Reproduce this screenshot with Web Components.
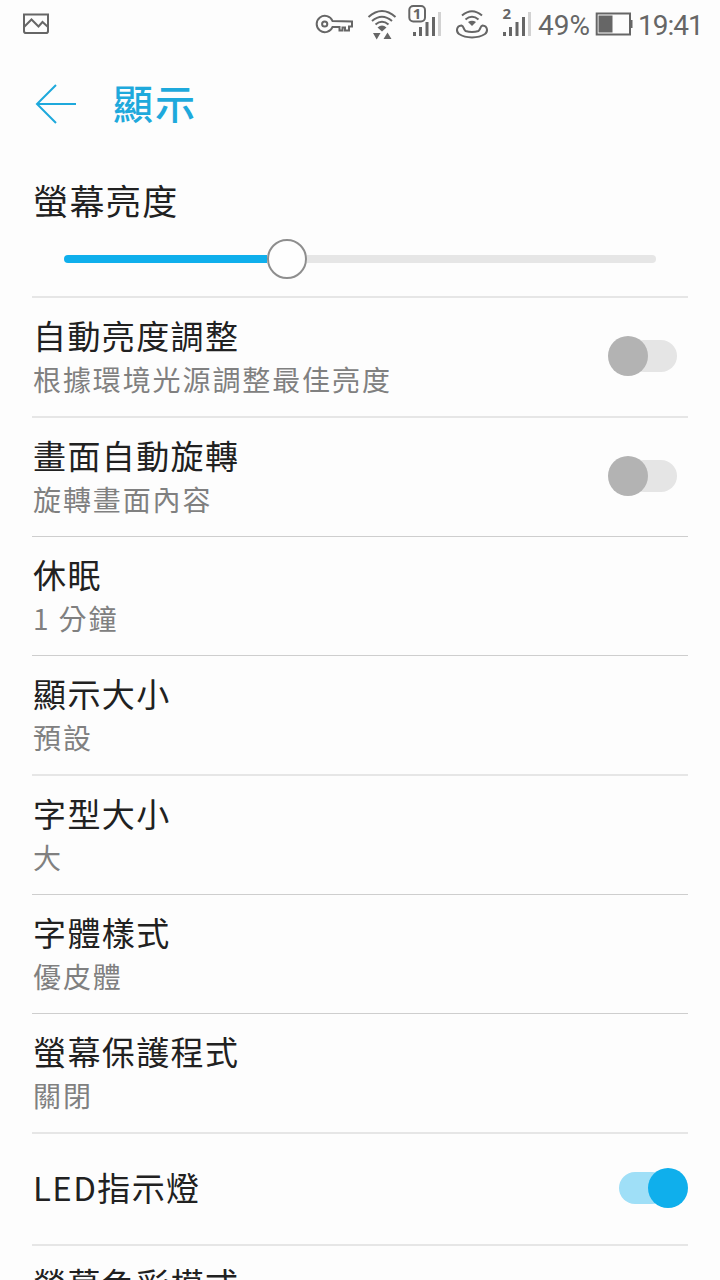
<!DOCTYPE html>
<html lang="zh-Hant">
<head>
<meta charset="utf-8">
<title>顯示</title>
<style>
	body {
		margin: 0;
		width: 720px;
		height: 1280px;
		overflow: hidden;
		background: #fdfdfd;
		font-family: 'Noto Sans CJK TC', sans-serif;
		color: #212121;
	}
</style>
</head>
<body>
<display-settings></display-settings>

<script>
class StatusBar extends HTMLElement {

	constructor() {

		super();

		this.attachShadow({ mode: 'open' });
		this.shadowRoot.innerHTML = `
			<style>
				:host {
					display: flex;
					height: 48px;
					padding: 0 17px 0 22px;
					color: #666;
					font: 28px/51px Roboto, sans-serif;
				}
				svg {
					display: block;
					flex: none;
					fill: none;
					stroke: currentColor;
					stroke-width: 2;
				}
				.solid { fill: currentColor; stroke: none; }
				.dim { fill: #d2d2d2; stroke: none; }
				.spacer { flex: 1; }
				.percent { width: 57px; }
				.clock {
					width: 65px;
					letter-spacing: -1px;
				}
				.percent, .clock { white-space: nowrap; }
				svg text {
					font: bold 15px 'Open Sans', sans-serif;
					fill: currentColor;
					stroke: none;
				}
			</style>
			<svg width="28" height="48">
				<path d="M2 14.5H26V31.2Q26 33 24 33H4Q2 33 2 31.2ZM2 27L9.5 19.5L16.5 26.5L20.5 22L26 27"/>
			</svg>
			<div class="spacer"></div>
			<svg width="41" height="48">
				<path d="M18.500 21A8.200 8.200 0 1 0 18.500 27H25.500V30.500H28.500V27.500H31V30.500H35V26.500H38V21.500Z"/>
				<circle cx="10.700" cy="24" r="2.600"/>
			</svg>
			<svg width="53" height="48" viewBox="355 0 53 48">
				<path d="M368.500 17Q382 5 395.500 17M372 21Q382 12.500 392 21M375.500 24.500Q382 19 388.500 24.500"/>
				<path class="solid" d="M377.500 27.500Q382 23.500 386.500 27.500L382 31.500ZM373 33H380.500L376.700 39.500ZM383.500 39H391.500L387.500 32.500Z"/>
			</svg>
			<svg width="47" height="48" viewBox="408 0 47 48">
				<rect x="409.300" y="6" width="15.700" height="15.500" rx="4"/>
				<text x="412.700" y="19">1</text>
				<path class="solid" d="M413 32H416V36H413ZM419 27H422V36H419ZM425.500 22H428.500V36H425.500ZM432 17H435V36H432Z"/>
				<path class="dim" d="M438 12H441V36H438Z"/>
			</svg>
			<svg width="47" height="48" viewBox="455 0 47 48">
				<path d="M462 15.500Q472 7 482 15.500M465.500 19.500Q472 14 478.500 19.500"/>
				<path class="solid" d="M468 22Q472 19.500 476 22L472 26Z"/>
				<path d="M461.500 25.500C456 26 456 32 459 34C466 38.500 478 38.500 485 34C488 32 488 26 482.500 25.500C480 26 481 29 478.500 31Q472 33 465.500 31C463 29 464 26 461.500 25.500Z"/>
			</svg>
			<svg width="36" height="48" viewBox="502 0 36 48">
				<text x="502.500" y="19">2</text>
				<path class="solid" d="M503 32H506V36H503ZM509 27H512V36H509ZM515.500 22H518.500V36H515.500ZM522 17H525V36H522Z"/>
				<path class="dim" d="M528 12H531V36H528Z"/>
			</svg>
			<span class="percent">49%</span>
			<svg width="43" height="48" viewBox="595 0 43 48">
				<rect x="596.700" y="13.500" width="33.300" height="21"/>
				<path class="solid" d="M598.500 15.500H612.500V32.500H598.500ZM630 20H632.500V28H630Z"/>
			</svg>
			<span class="clock">19:41</span>
		`;

	}

}

class TitleBar extends HTMLElement {

	constructor() {

		super();

		this.attachShadow({ mode: 'open' });
		this.shadowRoot.innerHTML = `
			<style>
				:host {
					display: flex;
					align-items: center;
					height: 112px;
					padding-left: 35px;
					gap: 37px;
					color: #1ea9dc;
				}
				svg {
					fill: none;
					stroke: currentColor;
					stroke-width: 2;
				}
				h1 {
					margin: 0;
					padding-bottom: 5px;
					font-size: 40px;
					font-weight: 500;
					line-height: 56px;
					letter-spacing: 2px;
				}
			</style>
			<svg width="41" height="40"><path d="M21 1L2 20L21 39M2 20H41"/></svg>
			<h1><slot></slot></h1>
		`;

	}

}

class BrightnessSlider extends HTMLElement {

	constructor() {

		super();

		this._value = this.getAttribute('value');

		this.attachShadow({ mode: 'open' });
		this.shadowRoot.innerHTML = `
			<style>
				:host {
					display: block;
					box-sizing: border-box;
					height: 138px;
					margin: 0 32px;
					padding-top: 16px;
					border-bottom: 2px solid #e6e6e6;
				}
				.label {
					padding-left: 1px;
					font-size: 35px;
					line-height: 48px;
					letter-spacing: 1.4px;
				}
				.track {
					display: flex;
					align-items: center;
					height: 40px;
					margin: 14.5px 32px 0;
				}
				.done, .rest {
					height: 8px;
					background: #0fafec;
					border-radius: 4px 0 0 4px;
				}
				.done { width: ${this._value}px; }
				.rest {
					flex: 1;
					background: #e6e6e6;
					border-radius: 0 4px 4px 0;
				}
				.thumb {
					box-sizing: border-box;
					width: 40px;
					height: 40px;
					border: 2px solid #8e8e8e;
					border-radius: 50%;
					background: #fefefe;
				}
			</style>
			<div class="label"><slot></slot></div>
			<div class="track">
				<div class="done"></div>
				<div class="thumb"></div>
				<div class="rest"></div>
			</div>
		`;

	}

}

class ToggleSwitch extends HTMLElement {

	constructor() {

		super();

		this.attachShadow({ mode: 'open' });
		this.shadowRoot.innerHTML = `
			<style>
				:host {
					display: flex;
					align-items: center;
					width: 69px;
					height: 40px;
					margin: 0 11px 2px 0;
				}
				:host([on]) {
					flex-direction: row-reverse;
					margin-right: 0;
				}
				.knob {
					width: 40px;
					height: 40px;
					border-radius: 50%;
					background: #b3b3b3;
					z-index: 1;
				}
				.rail {
					flex: 1;
					height: 32px;
					margin-left: -20px;
					border-radius: 16px;
					background: #e5e5e5;
				}
				:host([on]) .knob { background: #0fafec; }
				:host([on]) .rail {
					margin: 0 -20px 0 0;
					background: #9fdff7;
				}
			</style>
			<div class="knob"></div>
			<div class="rail"></div>
		`;

	}

}

class SettingRow extends HTMLElement {

	constructor() {

		super();

		this._height = this.getAttribute('height') || 119;
		this._line = this.getAttribute('line') || 1;
		this._summary = this.getAttribute('summary');

		this.attachShadow({ mode: 'open' });
		this.shadowRoot.innerHTML = `
			<style>
				:host {
					display: flex;
					justify-content: space-between;
					align-items: center;
					box-sizing: border-box;
					height: ${this._height}px;
					margin: 0 32px;
					border-bottom: ${this._line}px solid ${this._line > 1 ? '#e6e6e6' : '#cecece'};
				}
				.text {
					padding: 0 0 ${this._summary ? 1 : 4}px 1px;
				}
				.title, .summary { white-space: nowrap; }
				.title {
					font-size: 33px;
					line-height: 46px;
					letter-spacing: 1.4px;
				}
				.summary {
					color: #808080;
					font-size: 28px;
					line-height: 43px;
					letter-spacing: 1.9px;
				}
			</style>
			<div class="text">
				<div class="title">${this.getAttribute('title')}</div>
				${this._summary ? `<div class="summary">${this._summary}</div>` : ''}
			</div>
			<slot></slot>
		`;

	}

}

class DisplaySettings extends HTMLElement {

	constructor() {

		super();

		this.attachShadow({ mode: 'open' });
		this.shadowRoot.innerHTML = `
			<style>
				:host {
					display: block;
					height: 1280px;
					overflow: hidden;
				}
			</style>
			<status-bar></status-bar>
			<title-bar>顯示</title-bar>
			<brightness-slider value="203">螢幕亮度</brightness-slider>
			<setting-row title="自動亮度調整" summary="根據環境光源調整最佳亮度" height="120" line="2"><toggle-switch></toggle-switch></setting-row>
			<setting-row title="畫面自動旋轉" summary="旋轉畫面內容"><toggle-switch></toggle-switch></setting-row>
			<setting-row title="休眠" summary="1 分鐘"></setting-row>
			<setting-row title="顯示大小" summary="預設" height="120" line="2"></setting-row>
			<setting-row title="字型大小" summary="大"></setting-row>
			<setting-row title="字體樣式" summary="優皮體"></setting-row>
			<setting-row title="螢幕保護程式" summary="關閉" height="120" line="2"></setting-row>
			<setting-row title="LED指示燈" height="112" line="2"><toggle-switch on></toggle-switch></setting-row>
			<setting-row title="螢幕色彩模式" height="78"></setting-row>
		`;

	}

}

customElements.define('status-bar', StatusBar);
customElements.define('title-bar', TitleBar);
customElements.define('brightness-slider', BrightnessSlider);
customElements.define('toggle-switch', ToggleSwitch);
customElements.define('setting-row', SettingRow);
customElements.define('display-settings', DisplaySettings);
</script>
</body>
</html>
